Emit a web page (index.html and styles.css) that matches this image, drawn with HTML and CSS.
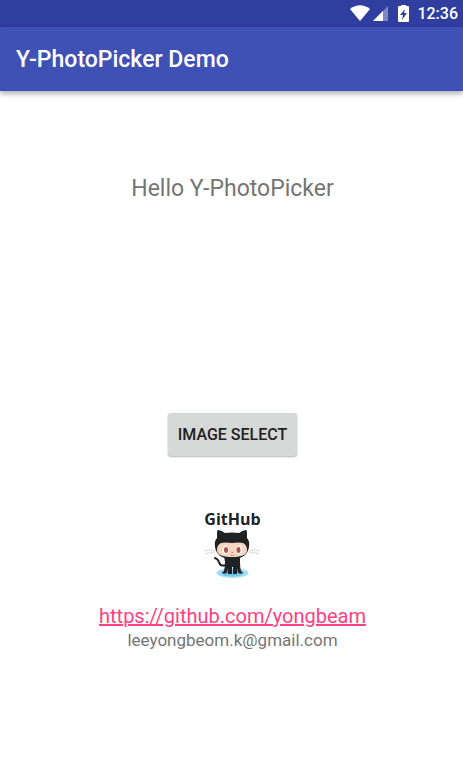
FILE: index.html
```html
<!DOCTYPE html>
<html lang="en">
<head>
<meta charset="utf-8">
<meta name="viewport" content="width=device-width, initial-scale=1">
<title>Y-PhotoPicker Demo</title>
<link rel="stylesheet" href="styles.css">
</head>
<body>
<div class="status-bar">
  <svg class="status-icons" width="60" height="20" viewBox="0 0 60 20" aria-hidden="true">
    <path fill="#fff" d="M1 7Q11 -.5 21 7L11 19Z"/>
    <path fill="#8087c3" d="M39 4V19H24Z"/>
    <path fill="#fff" d="M34 9V19H24Z"/>
    <path fill="#fff" d="M50 4h2V3h5v1h2q1 0 1 1v14q0 1-1 1h-9q-1 0-1-1V5q0-1 1-1Z"/>
    <path fill="#303f9f" d="M56 7L51 13h3l-1 5 5-7h-3Z"/>
  </svg>
  <time class="clock">12:36</time>
</div>
<header class="app-bar">
  <h1 class="title">Y-PhotoPicker Demo</h1>
</header>
<main class="content">
  <p class="greeting">Hello Y-PhotoPicker</p>
  <button class="select-button" type="button">IMAGE SELECT</button>
  <div class="brand">
    <span class="brand-name">GitHub</span>
    <svg class="octocat" width="60" height="50" viewBox="2 0 60 50" aria-hidden="true">
      <ellipse cx="31.500" cy="44" rx="16" ry="5" fill="#a5e0f8"/>
      <ellipse cx="31.500" cy="44" rx="12" ry="3.500" fill="#74c8ef"/>
      <path d="M14 22Q8 20 3 22M14 24Q8 23 4 25M48 22Q54 20 59 22M48 24Q54 23 58 25" fill="none" stroke="#d8d8d8"/>
      <path d="M25 36Q19 38 18 33Q17 30 14 29" fill="none" stroke="#202326" stroke-width="2" stroke-linecap="round"/>
      <path fill="#202326" d="M23 27h16v6q0 6 1 9l2 2q-4 2-5-1v-4l-1 6h-4v-7h-1v7h-4l-1-6v4q-1 3-5 1l2-2q1-3 1-9Z"/>
      <path fill="#202326" d="M16 5q0-4 1-4 3 0 7 3 7-1 14 0 4-3 7-3 1 0 1 4v4q3 3 2 9-2 12-17 12T14 18q-1-6 2-9Z"/>
      <path fill="#f7d5c1" d="M20 14q4-1 11 0 7-1 11 0 4 2 4 7 0 7-15 7t-15-7q0-5 4-7Z"/>
      <ellipse cx="24.500" cy="21" rx="3" ry="4" fill="#fff"/>
      <ellipse cx="38" cy="21" rx="3" ry="4" fill="#fff"/>
      <ellipse cx="25" cy="21" rx="2" ry="3" fill="#a55550"/>
      <ellipse cx="37.500" cy="21" rx="2" ry="3" fill="#a55550"/>
      <path d="M30.500 23.500h1.500M29.500 26q2 1 4 0" fill="none" stroke="#c98672"/>
    </svg>
  </div>
  <a class="repo-link" href="https://github.com/yongbeam">https://github.com/yongbeam</a>
  <p class="email">leeyongbeom.k@gmail.com</p>
</main>
</body>
</html>
```

FILE: styles.css
```css
* {
  box-sizing: border-box;
}

body {
  margin: 0;
  background: #fff;
  color: #757575;
  font-family: Roboto, sans-serif;
}

.status-bar {
  display: flex;
  justify-content: flex-end;
  align-items: center;
  gap: 8px;
  height: 27px;
  padding-right: 5px;
  background: #303f9f;
  color: #fff;
}

.status-icons {
  margin-bottom: 4px;
}

.clock {
  font-size: 16px;
  font-weight: 500;
  line-height: 26px;
}

.app-bar {
  display: flex;
  align-items: center;
  height: 64px;
  padding: 2px 16px 0;
  background: #3f51b5;
  box-shadow: 0 3px 5px rgba(0, 0, 0, 0.3);
}

.title {
  margin: 0;
  color: #fff;
  font-size: 23px;
  font-weight: 500;
  line-height: 32px;
}

.content {
  display: flex;
  flex-direction: column;
  align-items: center;
  padding: 81px 15px 80px 17px;
}

.greeting {
  margin: 0 0 207px;
  font-size: 23px;
  line-height: 34px;
}

.select-button {
  height: 43px;
  padding: 0 10px;
  border: 0;
  border-radius: 3px;
  background: #d6d7d7;
  box-shadow: 0 1px 2px rgba(0, 0, 0, 0.3);
  color: #212121;
  font-family: inherit;
  font-size: 16px;
  font-weight: 500;
}

.brand {
  display: flex;
  flex-direction: column;
  align-items: center;
  margin: 53px 0 24px;
}

.brand-name {
  color: #202326;
  font-family: "Open Sans", sans-serif;
  font-size: 16px;
  font-weight: 700;
  line-height: 20px;
}

.repo-link {
  color: #ff4081;
  font-size: 20px;
  line-height: 26px;
}

.email {
  margin: 0;
  font-size: 17px;
  line-height: 22px;
}
```
